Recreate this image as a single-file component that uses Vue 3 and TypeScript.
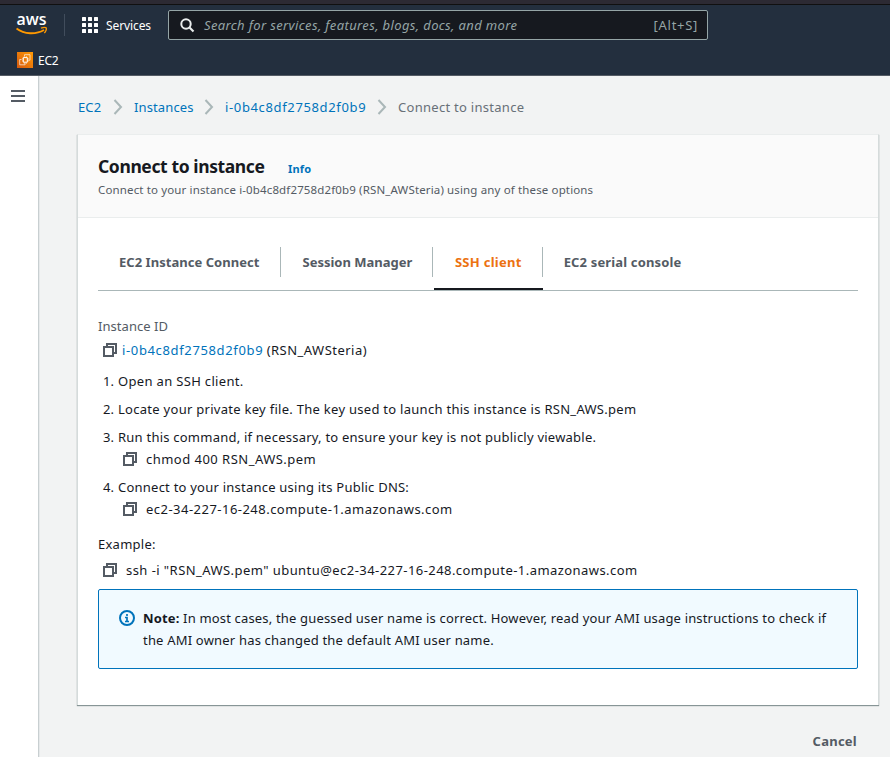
<script setup lang="ts">
interface Crumb { label: string; width: number; kind?: string }
interface Tab { label: string; active?: boolean }
interface Step { text: string; copy?: string }

const crumbs: Crumb[] = [
  { label: 'EC2', width: 24 },
  { label: 'Instances', width: 59 },
  { label: 'i-0b4c8df2758d2f0b9', width: 141, kind: 'wide' },
  { label: 'Connect to instance', width: 126, kind: 'current' },
]
const tabs: Tab[] = [
  { label: 'EC2 Instance Connect' },
  { label: 'Session Manager' },
  { label: 'SSH client', active: true },
  { label: 'EC2 serial console' },
]
const steps: Step[] = [
  { text: 'Open an SSH client.' },
  { text: 'Locate your private key file. The key used to launch this instance is RSN_AWS.pem' },
  { text: 'Run this command, if necessary, to ensure your key is not publicly viewable.', copy: 'chmod 400 RSN_AWS.pem' },
  { text: 'Connect to your instance using its Public DNS:', copy: 'ec2-34-227-16-248.compute-1.amazonaws.com' },
]
const dots: number[] = [0, 6, 12]
</script>

<template>
  <div class="page">
    <header class="top">
      <div class="bar">
        <svg class="logo" width="33" height="36" viewBox="0 -7 33 36">
          <text x="0.5" y="11" textLength="30" lengthAdjust="spacingAndGlyphs">aws</text>
          <path d="M.5 14.500c7.700 6 19.500 6.200 27.500 1.500" fill="none" stroke="#f90" stroke-width="1.900" />
          <path d="M25 14.200c2.200-.8 4.700-.9 5.300-.2.500.8-.4 3.400-2 5" fill="none" stroke="#f90" stroke-width="1.300" />
        </svg>
        <span class="rule"></span>
        <svg class="grid" width="16" height="16" viewBox="0 0 16 16">
          <template v-for="y in dots" :key="y">
            <rect v-for="x in dots" :key="x" :x="x" :y="y" width="4" height="4" rx=".5" fill="#fff" />
          </template>
        </svg>
        <span class="services">Services</span>
        <div class="search">
          <svg width="15" height="15" viewBox="0 0 15 15" fill="none" stroke="#eaeded">
            <circle cx="6" cy="6" r="4.700" stroke-width="2" /><path d="M9.500 9.500l4 4" stroke-width="2.200" />
          </svg>
          <span class="placeholder">Search for services, features, blogs, docs, and more</span>
          <span class="hotkey">[Alt+S]</span>
        </div>
      </div>
      <div class="favorites">
        <svg width="16" height="16" viewBox="0 0 16 16" fill="none" stroke="#fff">
          <defs><linearGradient id="ec2" x1="0" y1="1" x2="1" y2="0"><stop stop-color="#d4590f" /><stop offset="1" stop-color="#ff9b05" /></linearGradient></defs>
          <rect width="16" height="16" fill="url(#ec2)" stroke="none" />
          <path d="M6.300 5.600h4v4.600h-4z" stroke-width="1" />
          <path d="M4.500 7.500H2.700v5.300h5.400v-1.500M7.500 4V2.700h5.500v5.500h-1.500M7.300 4.200v1.200M9.300 4.200v1.200M5 6.900h1.200M5 8.900h1.200M10.600 6.900h1.200M10.600 8.900h1.200M7.300 10.600v1.200M9.300 10.600v1.200" stroke-width=".65" />
        </svg>
        <span>EC2</span>
      </div>
    </header>

    <div class="body">
      <aside>
        <svg width="14" height="12" viewBox="0 0 14 12" fill="#545b64"><path d="M0 0h14v2H0zM0 5h14v2H0zM0 10h14v2H0z" /></svg>
      </aside>
      <main>
        <nav class="crumbs">
          <template v-for="(c, i) in crumbs" :key="c.label">
            <svg v-if="i" class="chev" width="10" height="16" viewBox="0 0 10 16"><path d="M1.500 1l6.500 7-6.500 7" fill="none" stroke="#aab7b8" stroke-width="2" /></svg>
            <span :class="c.kind" :style="{ width: c.width + 'px' }">{{ c.label }}</span>
          </template>
        </nav>

        <section class="card">
          <div class="card-head">
            <div class="title-row"><h1>Connect to instance</h1><a class="info">Info</a></div>
            <p>Connect to your instance i-0b4c8df2758d2f0b9 (RSN_AWSteria) using any of these options</p>
          </div>
          <div class="card-body">
            <div class="tabs">
              <div v-for="t in tabs" :key="t.label" class="tab" :class="{ active: t.active }"><span>{{ t.label }}</span></div>
            </div>
            <div class="label">Instance ID</div>
            <div class="copyline id">
              <svg class="copy" width="14" height="14" viewBox="0 0 14 14"><path d="M1 4h9v9H1zM4 4V1h9v9h-3" /></svg>
              <span><a class="instance">i-0b4c8df2758d2f0b9</a> <span class="owner">(RSN_AWSteria)</span></span>
            </div>
            <ol>
              <li v-for="(s, i) in steps" :key="s.text">
                <div class="step"><span class="num">{{ i + 1 }}.</span><span :class="'step-' + (i + 1)">{{ s.text }}</span></div>
                <div v-if="s.copy" class="copyline nested">
                  <svg class="copy" width="14" height="14" viewBox="0 0 14 14"><path d="M1 4h9v9H1zM4 4V1h9v9h-3" /></svg>
                  <span class="command">{{ s.copy }}</span>
                </div>
              </li>
            </ol>
            <div class="example">Example:</div>
            <div class="copyline ssh">
              <svg class="copy" width="14" height="14" viewBox="0 0 14 14"><path d="M1 4h9v9H1zM4 4V1h9v9h-3" /></svg>
              <span>ssh -i "RSN_AWS.pem" ubuntu@ec2-34-227-16-248.compute-1.amazonaws.com</span>
            </div>
            <div class="note">
              <svg width="16" height="16" viewBox="0 0 16 16" fill="none" stroke="#0073bb" stroke-width="2"><circle cx="8" cy="8" r="7" /><path d="M8 4v2M6 7.500h2v4M6 11.500h4" stroke-width="1.700" /></svg>
              <p><span class="line-1"><b>Note:</b> In most cases, the guessed user name is correct. However, read your AMI usage instructions to check if</span><br><span class="line-2">the AMI owner has changed the default AMI user name.</span></p>
            </div>
          </div>
        </section>
        <div class="actions"><span>Cancel</span></div>
      </main>
    </div>
  </div>
</template>

<style>
body { margin: 0; background: #f2f3f3; }
</style>

<style scoped>
* { box-sizing: border-box; }
.page { height: 757px; overflow: hidden; display: flex; flex-direction: column; font: 13px/22px "Noto Sans", sans-serif; color: #16191f; white-space: nowrap; }
.top { height: 76px; flex: none; background: #232f3e; border-top: 4px solid #2c2a33; border-bottom: 1px solid #545b64; box-shadow: inset 0 1px #101010; color: #fff; }
.bar { display: flex; align-items: center; height: 42px; padding-left: 16px; }
.logo text { font: 600 17px "Open Sans", sans-serif; fill: #fff; }
.rule { width: 1px; height: 22px; margin: 0 17px 0 15px; background: #414d5c; }
.services { margin-left: 8px; padding-top: 2px; width: 62px; font-size: 12px; letter-spacing: -.1px; }
.search { display: flex; align-items: center; width: 540px; height: 30px; padding: 0 9px 0 11px; border: 1px solid #95a5a6; border-radius: 2px; background: #16191f; color: #95a5a6; }
.placeholder { margin-left: 9px; font-style: italic; letter-spacing: .37px; }
.hotkey { margin-left: auto; letter-spacing: .7px; }
.favorites { display: flex; align-items: center; gap: 5px; height: 20px; margin-top: 4px; padding-left: 17px; font-size: 12px; letter-spacing: -.2px; }
.favorites span { padding-top: 2px; }
.body { display: flex; flex: 1; }
aside { width: 39px; padding: 14px 0 0 11px; background: #fff; border-right: 1px solid #c8cfd1; box-shadow: 1px 0 #e6e9ea; }
aside svg { display: block; }
main { flex: 1; padding: 20px 11px 0 38px; }
.crumbs { display: flex; align-items: center; height: 22px; padding-left: 1px; color: #0073bb; letter-spacing: .12px; }
.chev { margin: 0 11px; }
.wide { letter-spacing: .64px; }
.current { color: #687078; letter-spacing: .28px; }
.card { width: 802px; height: 571px; margin-top: 16px; background: #fff; border-left: 1px solid #d5dbdb; border-right: 1px solid #d5dbdb; border-top: 1px solid #eaeded; box-shadow: 0 1px 1px #879596; }
.card-head { height: 83px; padding: 19px 20px 0; background: #fafafa; border-bottom: 1px solid #eaeded; }
.title-row { display: flex; align-items: center; height: 24px; }
h1 { width: 190px; margin: 0; font-size: 17.5px; font-weight: 700; letter-spacing: -.39px; }
.info { padding-top: 5px; font-size: 11px; font-weight: 700; letter-spacing: .15px; color: #0073bb; }
.card-head p { margin: 1px 0 0; font-size: 11.5px; letter-spacing: .14px; color: #545b64; }
.card-body { padding: 19px 20px 0; }
.tabs { display: flex; height: 54px; border-bottom: 1px solid #aab7b8; color: #545b64; font-weight: 700; }
.tab { height: 53px; padding: 10px 1px 0; border-bottom: 2px solid transparent; }
.tab span { display: block; height: 30px; padding: 4px 20px 0; }
.tab:first-child { letter-spacing: .04px; }
.tab:not(:last-child) span { border-right: 1px solid #aab7b8; }
.tab:last-child { letter-spacing: .15px; }
.tab.active { padding-right: 0; color: #ec7211; border-bottom-color: #16191f; letter-spacing: .28px; }
.tab.active span { padding-left: 19.500px; }
.label { margin-top: 24px; color: #545b64; letter-spacing: .05px; }
.copyline { display: flex; align-items: center; height: 22px; }
.copy { flex: none; fill: none; stroke: #545b64; stroke-width: 2; }
.id { margin: 2px 0 0 5px; gap: 5px; }
.instance { color: #0073bb; letter-spacing: .64px; }
.owner { letter-spacing: .48px; }
ol { list-style: none; margin: 9px 0 0 5px; padding: 0; display: grid; gap: 6px; }
.step { display: flex; }
.num { width: 15px; }
.step-1 { letter-spacing: .33px; }
.step-2 { letter-spacing: .28px; }
.step-3 { letter-spacing: .23px; }
.step-4 { letter-spacing: .23px; }
.command { letter-spacing: .475px; }
.nested { margin-left: 20px; gap: 9px; }
.example { margin-top: 13px; letter-spacing: .25px; }
.ssh { margin: 4px 0 0 5px; gap: 9px; letter-spacing: .44px; }
.note { display: flex; gap: 8px; width: 760px; height: 80px; margin-top: 8px; padding: 17px 20px; background: #f1faff; border: 1px solid #0073bb; border-radius: 2px; }
.note svg { margin-top: 3px; }
.note p { margin: 0; }
.line-1 { letter-spacing: .165px; }
.line-2 { letter-spacing: .19px; }
.actions { margin-top: 25px; padding-right: 22px; text-align: right; font-weight: 700; letter-spacing: .25px; color: #545b64; }
</style>
